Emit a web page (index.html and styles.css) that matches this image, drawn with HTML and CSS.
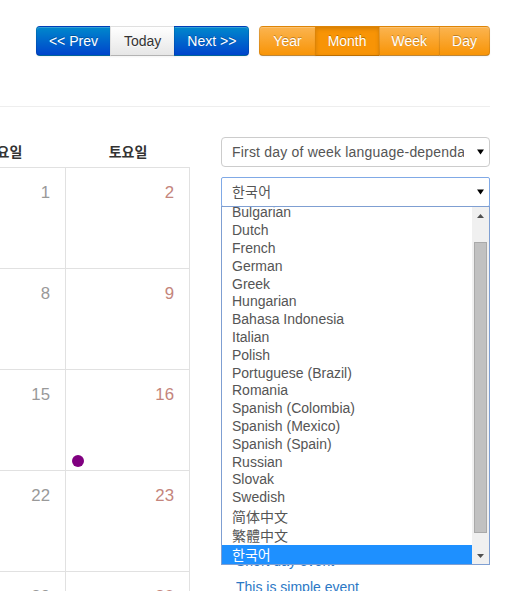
FILE: index.html
```html
<!DOCTYPE html>
<html lang="ko">
<head>
<meta charset="utf-8">
<title>Calendar</title>
<link rel="stylesheet" href="styles.css">
</head>
<body>
<div class="page">
  <header class="page-header">
    <div class="toolbar">
      <div class="btn-group">
        <button class="btn btn-primary">&lt;&lt; Prev</button>
        <button class="btn btn-today">Today</button>
        <button class="btn btn-primary">Next &gt;&gt;</button>
      </div>
      <div class="btn-group">
        <button class="btn btn-warning btn-year">Year</button>
        <button class="btn btn-warning active">Month</button>
        <button class="btn btn-warning">Week</button>
        <button class="btn btn-warning">Day</button>
      </div>
    </div>
  </header>

  <div class="main">
    <div class="cal-viewport">
      <div class="calendar">
        <div class="cal-head">
          <div class="cal-head-cell">금요일</div>
          <div class="cal-head-cell">토요일</div>
        </div>
        <div class="cal-row">
          <div class="cal-day"><span class="date">1</span></div>
          <div class="cal-day weekend"><span class="date">2</span></div>
        </div>
        <div class="cal-row">
          <div class="cal-day"><span class="date">8</span></div>
          <div class="cal-day weekend"><span class="date">9</span></div>
        </div>
        <div class="cal-row">
          <div class="cal-day"><span class="date">15</span></div>
          <div class="cal-day weekend"><span class="date">16</span>
            <div class="events"><span class="event event-special"></span></div>
          </div>
        </div>
        <div class="cal-row">
          <div class="cal-day"><span class="date">22</span></div>
          <div class="cal-day weekend"><span class="date">23</span></div>
        </div>
        <div class="cal-row">
          <div class="cal-day"><span class="date">29</span></div>
          <div class="cal-day weekend"><span class="date">30</span></div>
        </div>
      </div>
    </div>

    <aside class="side">
      <div class="select">
        <span class="select-text">First day of week language-dependant</span>
        <svg class="caret" width="7" height="6" viewBox="0 0 7 6"><polygon points="0,0.5 7,0.5 3.5,5.5" fill="#000"/></svg>
      </div>

      <div class="select-wrap">
        <div class="select focus">
          <span class="select-text">한국어</span>
          <svg class="caret" width="7" height="6" viewBox="0 0 7 6"><polygon points="0,0.5 7,0.5 3.5,5.5" fill="#000"/></svg>
        </div>
        <div class="listbox">
          <div class="options">
            <div class="opt">Select Language (default: en-US)</div>
            <div class="opt">Bulgarian</div>
            <div class="opt">Dutch</div>
            <div class="opt">French</div>
            <div class="opt">German</div>
            <div class="opt">Greek</div>
            <div class="opt">Hungarian</div>
            <div class="opt">Bahasa Indonesia</div>
            <div class="opt">Italian</div>
            <div class="opt">Polish</div>
            <div class="opt">Portuguese (Brazil)</div>
            <div class="opt">Romania</div>
            <div class="opt">Spanish (Colombia)</div>
            <div class="opt">Spanish (Mexico)</div>
            <div class="opt">Spanish (Spain)</div>
            <div class="opt">Russian</div>
            <div class="opt">Slovak</div>
            <div class="opt">Swedish</div>
            <div class="opt opt-cjk sc">简体中文</div>
            <div class="opt opt-cjk tc">繁體中文</div>
            <div class="opt opt-cjk kr selected">한국어</div>
          </div>
          <div class="scrollbar">
            <div class="sb-btn"><svg width="7" height="4" viewBox="0 0 7 4"><polygon points="0,4 7,4 3.5,0" fill="#505050"/></svg></div>
            <div class="sb-gap-top"></div>
            <div class="sb-thumb"></div>
            <div class="sb-gap-bottom"></div>
            <div class="sb-btn"><svg width="7" height="4" viewBox="0 0 7 4"><polygon points="0,0 7,0 3.5,4" fill="#505050"/></svg></div>
          </div>
        </div>
      </div>

      <h4 class="events-title">Events</h4>
      <ul class="event-list">
        <li><a href="#">Example event</a></li>
        <li><a href="#">This is warning event</a></li>
        <li><a href="#">This is information class</a></li>
        <li><a href="#">This is success event</a></li>
        <li><a href="#">This is simple event</a></li>
        <li><a href="#">This is inverse event</a></li>
        <li><a href="#">This is special event</a></li>
        <li><a href="#">Short day event</a></li>
        <li><a href="#">This is simple event</a></li>
        <li><a href="#">This is inverse event</a></li>
        <li><a href="#">This is special event</a></li>
        <li><a href="#">Short day event</a></li>
        <li><a href="#">This is simple event</a></li>
      </ul>
    </aside>
  </div>
</div>
</body>
</html>
```

FILE: styles.css
```css
* {
  box-sizing: border-box;
}

html, body {
  margin: 0;
  padding: 0;
  background: #fff;
}

body {
  font-family: "Liberation Sans", Arial, "Noto Sans CJK KR", sans-serif;
  font-size: 14px;
  line-height: 20px;
  color: #333;
  overflow: hidden;
}

.page {
  padding-right: 27px;
}

/* ---------- header / toolbar ---------- */
.page-header {
  padding-top: 26px;
  height: 107px;
  border-bottom: 1px solid #eee;
}

.toolbar {
  display: flex;
  justify-content: flex-end;
  gap: 10px;
}

.btn-group {
  display: flex;
}

.btn {
  display: inline-block;
  margin: 0;
  padding: 4px 12px;
  font-family: "Liberation Sans", Arial, sans-serif;
  font-size: 14px;
  line-height: 20px;
  color: #333;
  text-shadow: 0 1px 1px rgba(255, 255, 255, 0.75);
  background-color: #f5f5f5;
  background-image: linear-gradient(to bottom, #ffffff, #e6e6e6);
  border: 1px solid #cccccc;
  border-color: #e0e0e0 #e0e0e0 #bfbfbf;
  border-bottom-color: #b3b3b3;
  box-shadow: inset 0 1px 0 rgba(255, 255, 255, 0.2), 0 1px 2px rgba(0, 0, 0, 0.05);
  border-radius: 0;
  cursor: pointer;
}

.btn-today {
  padding: 4px 13px;
}

.btn-year {
  padding: 4px 13px;
}

.btn-group .btn + .btn {
  margin-left: -1px;
}

.btn-group .btn:first-child {
  border-radius: 4px 0 0 4px;
}

.btn-group .btn:last-child {
  border-radius: 0 4px 4px 0;
}

.btn-primary {
  color: #fff;
  text-shadow: 0 -1px 0 rgba(0, 0, 0, 0.25);
  background-color: #006dcc;
  background-image: linear-gradient(to bottom, #0088cc, #0044cc);
  border-color: rgba(0, 0, 0, 0.1) rgba(0, 0, 0, 0.1) rgba(0, 0, 0, 0.25);
}

.btn-warning {
  color: #fff;
  text-shadow: 0 -1px 0 rgba(0, 0, 0, 0.25);
  background-color: #faa732;
  background-image: linear-gradient(to bottom, #fbb450, #f89406);
  border-color: rgba(0, 0, 0, 0.1) rgba(0, 0, 0, 0.1) rgba(0, 0, 0, 0.25);
}

.btn-warning.active {
  background-color: #f89406;
  background-image: none;
  box-shadow: inset 0 2px 4px rgba(0, 0, 0, 0.15), 0 1px 2px rgba(0, 0, 0, 0.05);
}

/* ---------- main ---------- */
.main {
  display: flex;
  gap: 31px;
}

.cal-viewport {
  width: 190px;
  flex: none;
  overflow: hidden;
  padding-top: 30px;
}

.calendar {
  width: 250px;
  margin-left: -60px;
}

.cal-head,
.cal-row {
  display: grid;
  grid-template-columns: 126px 124px;
}

.cal-head-cell {
  height: 30px;
  line-height: 30px;
  text-align: center;
  font-weight: bold;
  font-size: 14px;
  color: #333;
  font-family: "Liberation Sans", "Noto Sans CJK KR", sans-serif;
}

.cal-row {
  border-top: 1px solid #e1e1e1;
}

.cal-day {
  height: 100px;
  border-right: 1px solid #e1e1e1;
  display: flex;
  flex-direction: column;
}

.date {
  align-self: flex-end;
  margin: 15px 15px 0 0;
  font-size: 16.8px;
  line-height: 20px;
  color: #999;
}

.weekend .date {
  color: #c4857c;
}

.events {
  margin-top: auto;
  padding: 0 0 3px 6px;
  display: flex;
}

.event {
  width: 12px;
  height: 12px;
  border-radius: 50%;
  background: #800080;
}

/* ---------- side ---------- */
.side {
  flex: 1;
  min-width: 0;
  padding-top: 30px;
}

.select {
  height: 30px;
  border: 1px solid #ccc;
  border-radius: 4px;
  background: #fff;
  display: flex;
  align-items: center;
  padding: 0 5px 0 10px;
  margin-bottom: 10px;
  color: #555;
  font-size: 14px;
}

.select-text {
  flex: 1;
  min-width: 0;
  white-space: nowrap;
  overflow: hidden;
  letter-spacing: 0.2px;
  font-family: "Liberation Sans", "Noto Sans CJK KR", sans-serif;
}

.caret {
  flex: none;
  margin-left: 13px;
}

.select.focus {
  border-color: #80a9e6;
  border-radius: 2px;
  margin-bottom: 0;
}

.select-wrap {
  position: relative;
  margin-bottom: 10px;
}

.listbox {
  position: absolute;
  top: calc(100% - 1px);
  left: 0;
  right: 0;
  height: 359px;
  border: 1px solid #7f9fd2;
  background: #fff;
  display: flex;
  z-index: 5;
}

.options {
  flex: 1;
  min-width: 0;
  display: flex;
  flex-direction: column;
  justify-content: flex-end;
  overflow: hidden;
}

.opt {
  flex: none;
  height: 17.8px;
  line-height: 17.8px;
  padding-left: 10px;
  color: #555;
  font-size: 14px;
  white-space: nowrap;
}

.opt-cjk {
  height: 19px;
  line-height: 19px;
}

.opt.sc {
  font-family: "Noto Sans CJK SC", sans-serif;
}

.opt.tc {
  font-family: "Noto Sans CJK TC", sans-serif;
}

.opt.kr {
  font-family: "Noto Sans CJK KR", sans-serif;
}

.opt.selected {
  background: #1e90ff;
  color: #fff;
}

.scrollbar {
  width: 17px;
  flex: none;
  background: #f0f0f0;
  display: flex;
  flex-direction: column;
  align-items: center;
}

.sb-btn {
  height: 17px;
  width: 100%;
  flex: none;
  display: flex;
  align-items: center;
  justify-content: center;
}

.sb-gap-top {
  height: 18px;
  flex: none;
}

.sb-gap-bottom {
  height: 14px;
  flex: none;
}

.sb-thumb {
  flex: 1;
  width: 13px;
  background: #c1c1c1;
  border: 1px solid #a9a9a9;
}

.events-title {
  margin: 10px 0 25px;
  font-size: 17.5px;
  line-height: 20px;
  font-weight: bold;
}

.event-list {
  list-style: none;
  margin: 0 0 20px;
  padding: 0 15px;
}

.event-list li a {
  display: block;
  padding: 3px 0;
  line-height: 20px;
  color: #2b78c5;
  text-decoration: none;
  white-space: nowrap;
  overflow: hidden;
  text-overflow: ellipsis;
}
```
